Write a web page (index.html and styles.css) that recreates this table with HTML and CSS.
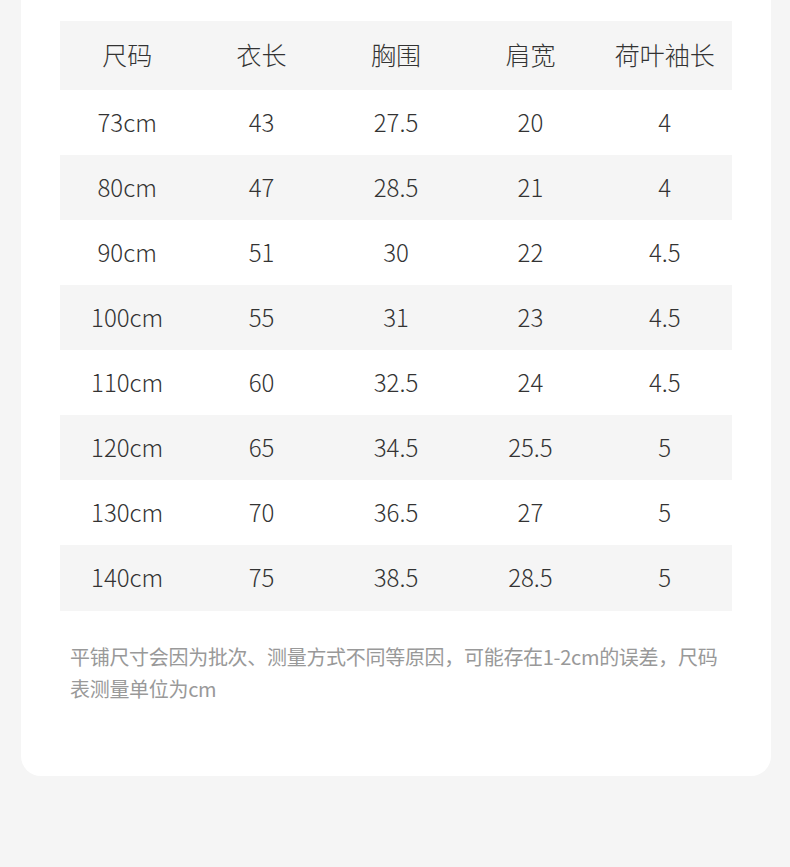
FILE: index.html
```html
<!DOCTYPE html>
<html lang="zh">
<head>
<meta charset="utf-8">
<link rel="stylesheet" href="styles.css">
</head>
<body>
<div class="card">
  <div class="table">
    <div class="row head"><div>尺码</div><div>衣长</div><div>胸围</div><div>肩宽</div><div>荷叶袖长</div></div>
    <div class="row"><div>73cm</div><div>43</div><div>27.5</div><div>20</div><div>4</div></div>
    <div class="row alt"><div>80cm</div><div>47</div><div>28.5</div><div>21</div><div>4</div></div>
    <div class="row"><div>90cm</div><div>51</div><div>30</div><div>22</div><div>4.5</div></div>
    <div class="row alt"><div>100cm</div><div>55</div><div>31</div><div>23</div><div>4.5</div></div>
    <div class="row"><div>110cm</div><div>60</div><div>32.5</div><div>24</div><div>4.5</div></div>
    <div class="row alt"><div>120cm</div><div>65</div><div>34.5</div><div>25.5</div><div>5</div></div>
    <div class="row"><div>130cm</div><div>70</div><div>36.5</div><div>27</div><div>5</div></div>
    <div class="row alt last"><div>140cm</div><div>75</div><div>38.5</div><div>28.5</div><div>5</div></div>
  </div>
  <p class="note">平铺尺寸会因为批次、测量方式不同等原因，可能存在1-2cm的误差，尺码表测量单位为cm</p>
</div>
</body>
</html>
```

FILE: styles.css
```css
html, body {
  margin: 0;
  padding: 0;
  background: #f5f5f5;
}
body {
  font-family: "Noto Sans CJK SC", "Noto Sans", sans-serif;
  width: 790px;
  height: 867px;
  overflow: hidden;
}
.card {
  margin: 0 19px 0 21px;
  background: #fff;
  border-radius: 0 0 20px 20px;
  padding: 21px 39px 71px 39px;
}
.table {
  display: flex;
  flex-direction: column;
}
.row {
  display: grid;
  grid-template-columns: repeat(5, 1fr);
  height: 65px;
  box-sizing: border-box;
  padding-bottom: 3px;
  align-items: center;
  color: #333;
  font-size: 24px;
  font-weight: 300;
}
.row > div {
  text-align: center;
}
.row.head {
  height: 69px;
  font-size: 25px;
  background: #f5f5f5;
}
.row.alt {
  background: #f5f5f5;
}
.row.last {
  height: 66px;
}
.note {
  margin: 30px 0 0 0;
  padding: 0 0 0 10px;
  font-size: 20px;
  line-height: 32px;
  letter-spacing: -0.3px;
  color: #999;
}
```
